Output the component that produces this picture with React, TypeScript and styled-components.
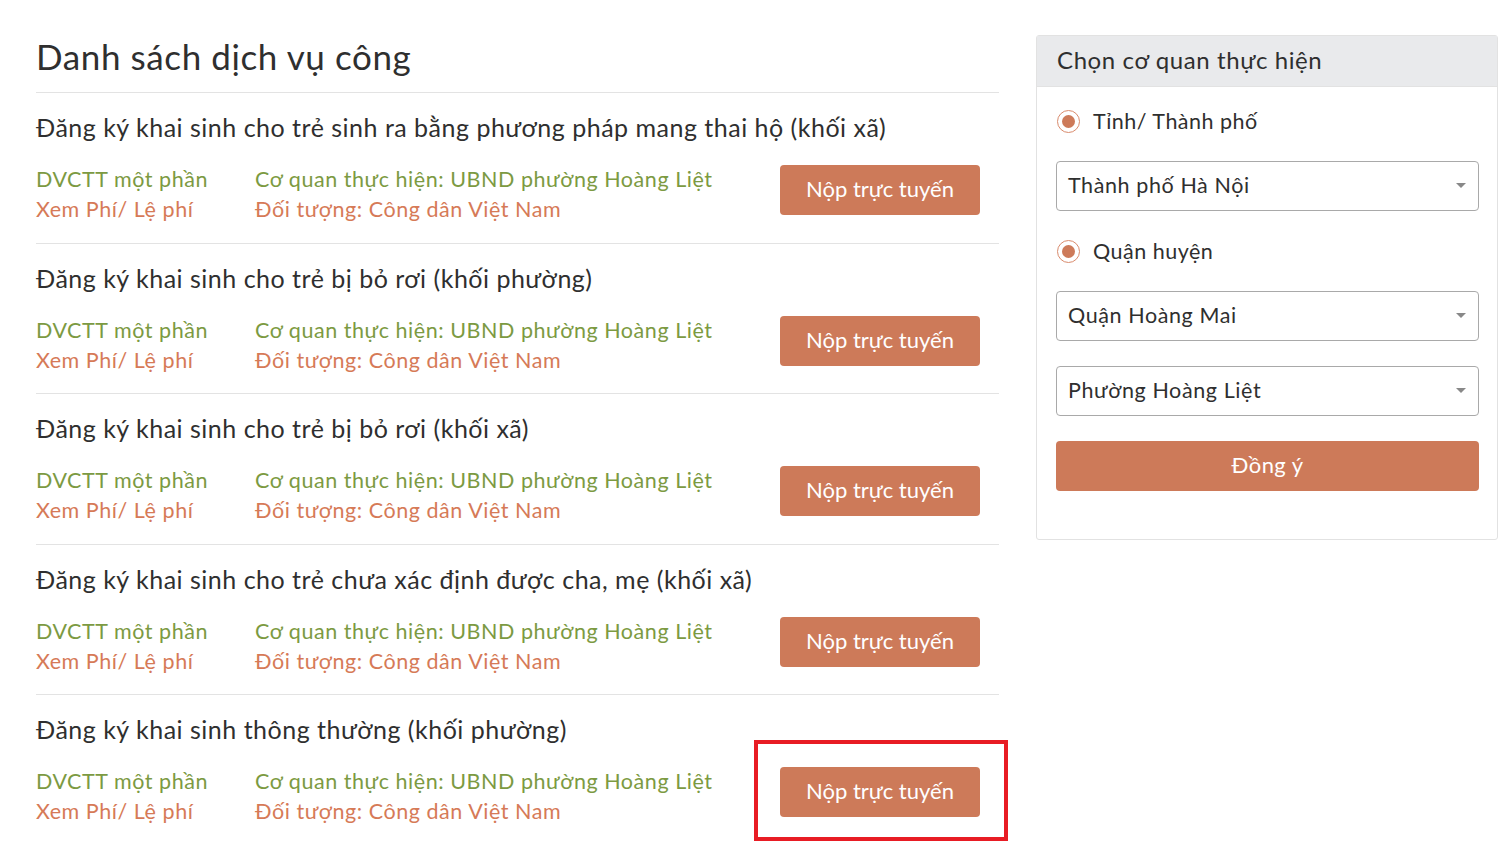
import styled, { createGlobalStyle } from "styled-components";

const GlobalStyle = createGlobalStyle`
  body {
    margin: 0;
    background: #fff;
    font-family: Lato, "Noto Sans", sans-serif;
    color: #333;
  }
`;

const COLORS = {
  text: "#2f2f2f",
  green: "#7c9a42",
  orange: "#d67a57",
  button: "#cd7a59",
  line: "#e3e3e3",
};

const Page = styled.div`
  display: flex;
  align-items: flex-start;
  padding: 20px 2px 0 36px;
  gap: 37px;
`;

const Main = styled.div`
  width: 963px;
  flex-shrink: 0;
`;

const PageTitle = styled.h1`
  margin: 0;
  font-size: 35px;
  font-weight: 400;
  letter-spacing: 0.6px;
  line-height: 72px;
  color: ${COLORS.text};
  border-bottom: 1px solid ${COLORS.line};
`;

const ServiceItem = styled.div`
  padding: 16px 0 18.5px;
  border-bottom: 1px solid ${COLORS.line};

  &:last-child {
    border-bottom: none;
  }
`;

const ServiceTitle = styled.div`
  font-size: 25px;
  letter-spacing: 0.5px;
  line-height: 36px;
  color: ${COLORS.text};
`;

const ServiceBody = styled.div`
  display: flex;
  align-items: flex-start;
  margin-top: 19px;
`;

interface InfoColProps {
  width?: number;
}

const InfoCol = styled.div<InfoColProps>`
  width: ${({ width }) => (width ? `${width}px` : "auto")};
  flex: ${({ width }) => (width ? "none" : "1")};
  font-size: 21.5px;
  letter-spacing: 0.55px;
  line-height: 30px;
`;

const Green = styled.div`
  color: ${COLORS.green};
`;

const Orange = styled.div`
  color: ${COLORS.orange};
`;

const ButtonWrap = styled.div`
  position: relative;
  margin-top: 1px;
  margin-right: 19px;
`;

const SubmitButton = styled.button`
  width: 200px;
  height: 50px;
  border: none;
  border-radius: 4px;
  background: ${COLORS.button};
  color: #fff;
  font-family: inherit;
  font-size: 22px;
  padding: 0 0 3px;
  cursor: pointer;
`;

const Highlight = styled.div`
  position: absolute;
  top: -27px;
  left: -26px;
  right: -28px;
  bottom: -24px;
  border: 4px solid #e81c24;
  pointer-events: none;
`;

const Panel = styled.div`
  width: 460px;
  border: 1px solid #e2e2e2;
  border-radius: 3px;
  margin-top: 15px;
  padding-bottom: 48px;
`;

const PanelHeader = styled.div`
  height: 50px;
  background: #e9eaec;
  border-bottom: 1px solid #e2e2e2;
  padding-left: 20px;
  font-size: 24px;
  letter-spacing: 0.6px;
  line-height: 48px;
  color: ${COLORS.text};
`;

const PanelBody = styled.div`
  display: flex;
  flex-direction: column;
  gap: 25px;
  padding: 19px 18px 0 19px;
`;

const RadioRow = styled.label`
  display: flex;
  align-items: center;
  gap: 13px;
  height: 30px;
  padding-left: 1px;
  font-size: 21.5px;
  letter-spacing: 0.5px;
  color: ${COLORS.text};
`;

const RadioCircle = styled.span`
  width: 21px;
  height: 21px;
  border: 1.5px solid #d98b6d;
  border-radius: 50%;
  display: flex;
  align-items: center;
  justify-content: center;

  &::after {
    content: "";
    width: 13px;
    height: 13px;
    border-radius: 50%;
    background: ${COLORS.button};
  }
`;

const SelectBox = styled.div`
  box-sizing: border-box;
  height: 50px;
  border: 1px solid #a9a9a9;
  border-radius: 4px;
  display: flex;
  align-items: center;
  justify-content: space-between;
  padding: 0 12px 2px 11px;
  font-size: 21.5px;
  letter-spacing: 0.6px;
  color: ${COLORS.text};
`;

const Caret = styled.span`
  width: 0;
  height: 0;
  border-left: 5px solid transparent;
  border-right: 5px solid transparent;
  border-top: 5px solid #888;
`;

const ConfirmButton = styled.button`
  height: 50px;
  border: none;
  border-radius: 4px;
  background: ${COLORS.button};
  color: #fff;
  font-family: inherit;
  font-size: 22px;
  letter-spacing: 0.4px;
  padding: 0 0 3px;
`;

const services = [
  "Đăng ký khai sinh cho trẻ sinh ra bằng phương pháp mang thai hộ (khối xã)",
  "Đăng ký khai sinh cho trẻ bị bỏ rơi (khối phường)",
  "Đăng ký khai sinh cho trẻ bị bỏ rơi (khối xã)",
  "Đăng ký khai sinh cho trẻ chưa xác định được cha, mẹ (khối xã)",
  "Đăng ký khai sinh thông thường (khối phường)",
];

const App = () => {
  return (
    <>
      <GlobalStyle />
      <Page>
        <Main>
          <PageTitle>Danh sách dịch vụ công</PageTitle>
          {services.map((name, i) => (
            <ServiceItem key={name}>
              <ServiceTitle>{name}</ServiceTitle>
              <ServiceBody>
                <InfoCol width={219}>
                  <Green>DVCTT một phần</Green>
                  <Orange>Xem Phí/ Lệ phí</Orange>
                </InfoCol>
                <InfoCol>
                  <Green>Cơ quan thực hiện: UBND phường Hoàng Liệt</Green>
                  <Orange>Đối tượng: Công dân Việt Nam</Orange>
                </InfoCol>
                <ButtonWrap>
                  <SubmitButton>Nộp trực tuyến</SubmitButton>
                  {i === services.length - 1 && <Highlight />}
                </ButtonWrap>
              </ServiceBody>
            </ServiceItem>
          ))}
        </Main>

        <Panel>
          <PanelHeader>Chọn cơ quan thực hiện</PanelHeader>
          <PanelBody>
            <RadioRow>
              <RadioCircle />
              Tỉnh/ Thành phố
            </RadioRow>
            <SelectBox>
              Thành phố Hà Nội
              <Caret />
            </SelectBox>
            <RadioRow>
              <RadioCircle />
              Quận huyện
            </RadioRow>
            <SelectBox>
              Quận Hoàng Mai
              <Caret />
            </SelectBox>
            <SelectBox>
              Phường Hoàng Liệt
              <Caret />
            </SelectBox>
            <ConfirmButton>Đồng ý</ConfirmButton>
          </PanelBody>
        </Panel>
      </Page>
    </>
  );
};

export default App;
